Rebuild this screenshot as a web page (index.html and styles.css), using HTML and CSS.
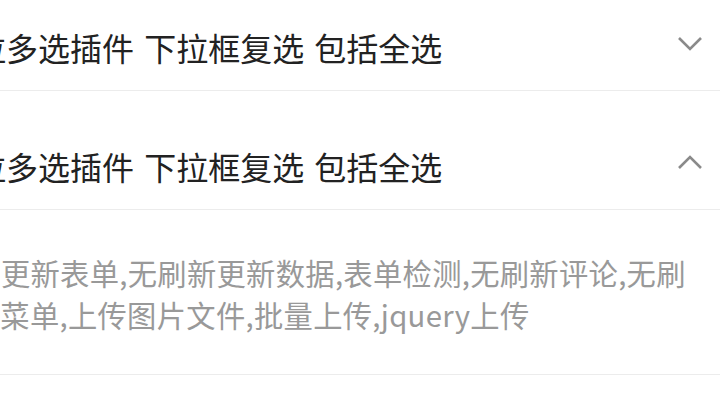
FILE: index.html
```html
<!DOCTYPE html>
<html lang="zh-CN">
<head>
<meta charset="utf-8">
<title>jQuery插件</title>
<link rel="stylesheet" href="styles.css">
</head>
<body>
<div class="list">
  <div class="item">
    <div class="head">
      <span class="title">下拉多选插件 下拉框复选 包括全选</span>
      <svg class="chev" width="26" height="16" viewBox="0 0 26 16"><path d="M2 2 L13 13 L24 2"/></svg>
    </div>
  </div>
  <div class="item open">
    <div class="head">
      <span class="title">下拉多选插件 下拉框复选 包括全选</span>
      <svg class="chev" width="26" height="16" viewBox="0 0 26 16"><path d="M2 13 L13 2 L24 13"/></svg>
    </div>
    <div class="body">
      <p class="desc">无刷新更新表单,无刷新更新数据,表单检测,无刷新评论,无刷新菜单,上传图片文件,批量上传,jquery上传</p>
    </div>
  </div>
</div>
</body>
</html>
```
FILE: styles.css
```css
html, body {
  margin: 0;
  padding: 0;
  background: #fff;
  overflow: hidden;
}
body {
  width: 720px;
  height: 400px;
  font-family: "Noto Sans CJK SC", "Noto Sans", sans-serif;
}
.list {
  margin-top: -28px;
  margin-left: -58px;
}
.item .head {
  display: flex;
  align-items: center;
  justify-content: space-between;
  padding: 55px 17px 23px 0;
  border-bottom: 1px solid #ececec;
}
.title {
  font-size: 32px;
  line-height: 40px;
  color: #222;
  word-spacing: 3px;
  white-space: nowrap;
}
.chev {
  display: block;
  flex: none;
  margin-top: -6px;
}
.chev path {
  fill: none;
  stroke: #8a8a8a;
  stroke-width: 2.6;
}
.body {
  padding: 41px 0 39px 28.7px;
  border-bottom: 1px solid #ececec;
}
.desc {
  margin: 0;
  font-size: 29.3px;
  line-height: 42px;
  color: #999;
  text-indent: -58.6px;
  max-width: 729px;
  letter-spacing: 0.3px;
}
```
